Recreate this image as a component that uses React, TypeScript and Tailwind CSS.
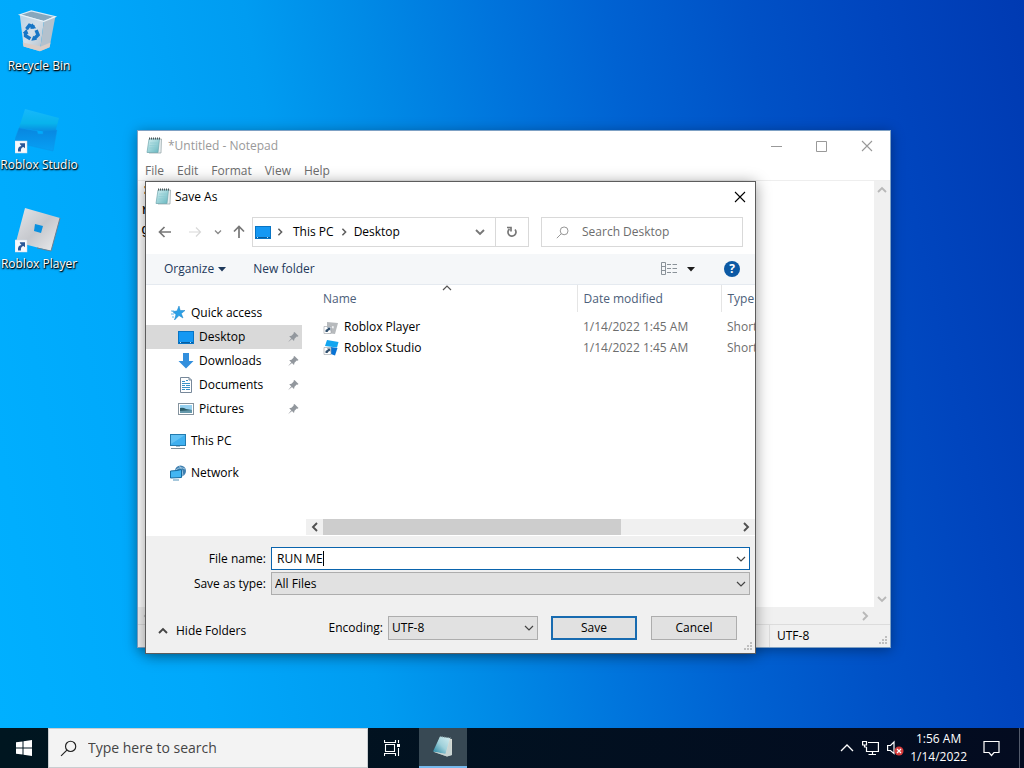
import type { ReactNode } from 'react';

function ShortcutArrow({ y = 34 }: { y?: number }) {
  return (
    <g transform={`translate(4 ${y})`}>
      <rect width="12" height="12" fill="#f7f9fc" stroke="#cfdbe8" strokeWidth="0.5" />
      <path d="M3 10.500C2.500 7 4 5.200 6.500 5L5 3.200 4.800 2.200H10V7.200L8.400 6C6.500 6.500 5.500 8 6 10.500Z" fill="#2b5797" />
    </g>
  );
}

function RecycleBinIcon() {
  return (
    <svg width="48" height="48" viewBox="4 -1 50 50" aria-hidden="true">
      <defs>
        <linearGradient id="bin" x1="0" y1="0" x2="1" y2="1">
          <stop offset="0" stopColor="#b9d3e6" />
          <stop offset="0.500" stopColor="#d5dfe8" />
          <stop offset="1" stopColor="#b4bfcb" />
        </linearGradient>
      </defs>
      <path d="M9 6 21 2 46 8 34 13Z" fill="#87a7bd" stroke="#dbeaf4" strokeWidth="1.200" />
      <path d="M9 6 34 13 30 44 13 39Z" fill="url(#bin)" />
      <path d="M34 13 46 8 40 40 30 44Z" fill="#b3c1cd" />
      <path d="M12 35 31 39 41 35 40 40 30 44 13 39Z" fill="#d9cdc8" />
      <path d="M9 6 34 13 46 8" fill="none" stroke="#eaf3f9" strokeWidth="1.200" />
      <g fill="none" stroke="#1876c6" strokeWidth="3.600">
        <path d="M16 21 19 17 24 19" />
        <path d="M26 22 28 27 24 31" />
        <path d="M20 31 15 28 15 24" />
      </g>
      <path d="m22 15 4 5-6 1Zm5 17-6 1 2-5ZM12 25l4-4 2 5Z" fill="#1876c6" />
    </svg>
  );
}

function StudioIcon() {
  return (
    <svg width="48" height="48" viewBox="4 0 48 48" aria-hidden="true">
      <defs>
        <linearGradient id="studioTop" x1="0" y1="0" x2="0" y2="1">
          <stop offset="0" stopColor="#17b8fb" />
          <stop offset="0.600" stopColor="#08b3ec" />
          <stop offset="1" stopColor="#0885df" />
        </linearGradient>
        <linearGradient id="studioLow" x1="0" y1="0" x2="0" y2="1">
          <stop offset="0" stopColor="#0886df" />
          <stop offset="1" stopColor="#07a0f5" />
        </linearGradient>
      </defs>
      <path d="M14 2 48 11 44 26 8 21Z" fill="url(#studioTop)" />
      <path d="M8 21 26 24 27 27 32 27 32 24 46 23 42 44 3 35Z" fill="url(#studioLow)" stroke="#0c94e6" strokeWidth="0.500" />
      <ShortcutArrow />
    </svg>
  );
}

function PlayerIcon() {
  return (
    <svg width="48" height="48" viewBox="4 0 48 48" aria-hidden="true">
      <defs>
        <linearGradient id="player" x1="0" y1="0" x2="1" y2="1">
          <stop offset="0" stopColor="#e4e6ea" />
          <stop offset="0.500" stopColor="#c6c8cd" />
          <stop offset="1" stopColor="#ededee" />
        </linearGradient>
      </defs>
      <path d="M14 2 49 12 40 45 5 36Z" fill="url(#player)" />
      <path d="M49 12 40 45 26 42" fill="none" stroke="#6d7f90" strokeWidth="1" />
      <path d="m24 18 8 2-2 7-7-2Z" fill="#0991e0" />
      <ShortcutArrow />
    </svg>
  );
}

function NotepadIcon() {
  return (
    <svg width="16" height="18" viewBox="0 0 16 18" aria-hidden="true">
      <defs>
        <linearGradient id="pad" x1="0" y1="0" x2="1" y2="1">
          <stop offset="0" stopColor="#d4f0f2" />
          <stop offset="1" stopColor="#65b6bf" />
        </linearGradient>
      </defs>
      <path d="M4 2H15.500L15 16H3Z" fill="#e9eef0" stroke="#8fa1a5" strokeWidth="0.700" />
      <path d="M3 2H13.500L12 15.500H1Z" fill="url(#pad)" stroke="#70a8af" strokeWidth="0.700" />
      <path d="M3 1.500H15" stroke="#4b5759" strokeWidth="1.800" strokeDasharray="1 1" />
      <path d="M4 6H11.500M3.700 8.500H11M3.300 11H10.700" stroke="#8ccbd1" strokeWidth="0.600" />
    </svg>
  );
}

function TaskNotepadIcon() {
  return (
    <svg width="24" height="24" viewBox="0 0 24 24" aria-hidden="true">
      <defs>
        <linearGradient id="task" x1="0" y1="1" x2="1" y2="0">
          <stop offset="0" stopColor="#1b7f9c" />
          <stop offset="0.500" stopColor="#9fd0da" />
          <stop offset="1" stopColor="#d5eef1" />
        </linearGradient>
      </defs>
      <path d="M9 2 21 4 21 20 16 21.500 3 17Z" fill="#d8dcd5" />
      <path d="M9 1.500 19 3 14.500 19 2 16.500Z" fill="url(#task)" />
      <path d="M9 1.500 20 3" stroke="#7b9299" strokeDasharray="1 1" />
      <path d="M2 16.500 14.500 19 19.500 4 21 20 16 21.500Z" fill="#c3d2d2" opacity="0.700" />
    </svg>
  );
}

function ScreenIcon() {
  return (
    <svg width="16" height="13" viewBox="0 0 16 13" aria-hidden="true">
      <rect x="0.500" y="0.500" width="15" height="12" fill="#1598f3" stroke="#0874c4" />
      <path d="M1 11.500H15" stroke="#075c9e" />
      <path d="M2 11.500H4M12 11.500H14" stroke="#bce0f8" strokeDasharray="1 1" />
    </svg>
  );
}

function Chevron({ className, dir = 'down', heavy = false }: { className?: string; dir?: 'up' | 'down' | 'left' | 'right'; heavy?: boolean }) {
  const paths = { down: 'M1 3 5 7 9 3', up: 'M1 7 5 3 9 7', left: 'M7 1 3 5 7 9', right: 'M3 1 7 5 3 9' };
  return (
    <svg width="10" height="10" viewBox="0 0 10 10" className={className} aria-hidden="true">
      <path d={paths[dir]} fill="none" stroke="currentColor" strokeWidth={heavy ? 1.9 : 1.2} />
    </svg>
  );
}

function CloseIcon() {
  return (
    <svg width="12" height="12" viewBox="0 0 12 12" aria-hidden="true">
      <path d="m1 1 10 10M11 1 1 11" stroke="currentColor" strokeWidth="1.100" />
    </svg>
  );
}

function Grip() {
  return (
    <svg width="9" height="9" viewBox="0 0 9 9" className="absolute right-0.5 bottom-0.5" aria-hidden="true">
      <path d="M6 0h2v2H6zM3 3h2v2H3zM6 3h2v2H6zM0 6h2v2H0zM3 6h2v2H3zM6 6h2v2H6z" fill="#bfbfbf" />
    </svg>
  );
}

function PinIcon() {
  return (
    <svg width="12" height="12" viewBox="0 0 12 12" aria-hidden="true">
      <path d="m7.500 1 4 4-1 .800-.800-.300L7.500 7.700 7 10 2.200 5.200 4.500 4.700 6.700 2.600 6.500 1.800ZM4.300 7.200 5 8 1 11.200Z" fill="#92979d" />
    </svg>
  );
}

function Magnifier({ size }: { size: number }) {
  return (
    <svg width={size} height={size} viewBox="0 0 16 16" aria-hidden="true">
      <circle cx="10" cy="6" r="4.800" fill="none" stroke="currentColor" strokeWidth="1.100" />
      <path d="M6.500 9.500 1 15" stroke="currentColor" strokeWidth="1.100" />
    </svg>
  );
}

function DesktopIcon({ label, children }: { label: string; children: ReactNode }) {
  return (
    <button className="flex h-[99px] w-[78px] flex-col items-center gap-[2px] text-xs leading-4 whitespace-nowrap text-white [text-shadow:0_1px_2px_#000,1px_1px_1px_#000]">
      {children}
      {label}
    </button>
  );
}

const starIcon = (
  <svg width="14" height="14" viewBox="0 0 14 14" aria-hidden="true">
    <path d="m8 0 1.200 4.500H14L10.300 7.500 12 12 8 9.500 3.500 14 5 8.500 1.500 5.500 6 5Z" fill="#2ba0e6" stroke="#1781c9" strokeWidth="0.500" />
    <path d="M0 5H3M0 8H3M1 11H3" stroke="#62b6e9" />
  </svg>
);
const downloadIcon = (
  <svg width="16" height="16" viewBox="0 0 16 16" aria-hidden="true">
    <path d="M5 0H11V8H15.500L8 15.500 .500 8H5Z" fill="#328fdd" />
  </svg>
);
const documentIcon = (
  <svg width="16" height="16" viewBox="0 0 16 16" aria-hidden="true">
    <path d="M2.500.500H11L13.500 3V15.500H2.500Z" fill="#fff" stroke="#77889a" />
    <path d="M11 .500V3H13.500" fill="none" stroke="#77889a" />
    <path d="M4 4.500H7M8 3.500H10M4 6.500H12M4 8.500H7M8 8.500H12M4 10.500H12M4 12.500H7M8 12.500H12" stroke="#3a93c8" />
  </svg>
);
const pictureIcon = (
  <svg width="16" height="12" viewBox="0 0 16 12" aria-hidden="true">
    <rect x="0.500" y="0.500" width="15" height="11" fill="#fff" stroke="#85939e" />
    <path d="M2 2H14V10H2Z" fill="#96d0ef" />
    <path d="M2 5Q5 4 8 6L14 7V10H2Z" fill="#2b5c68" />
    <path d="M2 8 14 7V10H2Z" fill="#6598ab" />
  </svg>
);
const pcIcon = (
  <svg width="16" height="15" viewBox="0 0 16 15" aria-hidden="true">
    <rect x="0.500" y="0.500" width="15" height="11" fill="#3fb0f0" stroke="#237baf" />
    <path d="M1 1H15L1 10Z" fill="#86d3fa" opacity="0.500" />
    <path d="M6 12H10V13H6Z" fill="#a3bccb" />
    <path d="M1 14.500H15" stroke="#7d8f99" />
  </svg>
);
const networkIcon = (
  <svg width="16" height="16" viewBox="0 0 16 16" aria-hidden="true">
    <circle cx="10.500" cy="6" r="5.500" fill="#3f7fb0" />
    <path d="M6 5Q10 1 15 4M9.500 1Q13 5 13 11" fill="none" stroke="#a9cee4" strokeWidth="0.900" />
    <path d="M.500 6 7 5.500 11.500 4.500V12.500L.500 13Z" fill="#43b6f2" stroke="#176b9f" />
    <path d="M3 15H9" stroke="#4f92b9" />
  </svg>
);

function FileIcon({ studio }: { studio: boolean }) {
  return (
    <svg width="16" height="16" viewBox="0 0 16 16" aria-hidden="true">
      {studio ? (
        <>
          <path d="M4 0 15.500 2 14 7.500 2 6Z" fill="#12a5f0" />
          <path d="M8 7 14.500 8 12 15.500 5 13Z" fill="#0873d4" />
        </>
      ) : (
        <>
          <path d="m4 3 11 1-3 11-8-1Z" fill="#b7babd" />
          <path d="m9 7 2 .500-.500 2-2-.500Z" fill="#eef0f2" />
        </>
      )}
      <path d="M1 7.500H8V14.500H1Z" fill="#fff" stroke="#9a9fa5" strokeWidth="0.600" />
      <path d="M2.500 13V11L5 9.500 4 8.500H7.300V11.800L6.200 10.800 4.500 13Z" fill="#30506e" />
    </svg>
  );
}

function SideRow({ icon, label, pinned = false, selected = false }: { icon: ReactNode; label: string; pinned?: boolean; selected?: boolean }) {
  return (
    <button className={`flex h-6 w-[156px] items-center gap-[5px] pr-[3px] text-black ${pinned ? 'pl-8' : 'pl-6'} ${selected ? 'bg-[#d9d9d9]' : ''}`}>
      <span className="flex w-4 justify-center">{icon}</span>
      <span className="flex-1 text-left">{label}</span>
      {pinned && <PinIcon />}
    </button>
  );
}

const files = [
  { name: 'Roblox Player', date: '1/14/2022 1:45 AM', type: 'Shortcut', studio: false },
  { name: 'Roblox Studio', date: '1/14/2022 1:45 AM', type: 'Shortcut', studio: true },
];

function SaveAsDialog() {
  return (
    <section role="dialog" aria-label="Save As" className="absolute top-[181px] left-[145px] w-[611px] border border-[#5c5c5c] bg-white shadow-[0_2px_14px_rgba(0,0,0,0.4)]">
      <header className="flex h-[30px] items-center gap-1 pl-[9px]">
        <NotepadIcon />
        <h2 className="flex-1">Save As</h2>
        <button aria-label="Close" className="flex h-7 w-[31px] items-center justify-center">
          <CloseIcon />
        </button>
      </header>

      <div className="mt-1 flex h-[32px] items-center pr-3 pl-3 text-[#5d5d5d]">
        <button aria-label="Back" className="mr-4">
          <svg width="14" height="14" viewBox="0 0 14 14" aria-hidden="true"><path d="M13 7H2M6.500 2 1.500 7 6.500 12" fill="none" stroke="#777" strokeWidth="1.700" /></svg>
        </button>
        <button aria-label="Forward" className="mr-3">
          <svg width="14" height="14" viewBox="0 0 14 14" aria-hidden="true"><path d="M1 7H12M8 2.500 12.500 7 8 11.500" fill="none" stroke="#d8d8d8" strokeWidth="1.200" /></svg>
        </button>
        <button aria-label="Recent locations" className="mr-2.5">
          <svg width="8" height="8" viewBox="0 0 8 8" aria-hidden="true"><path d="M1 2.500 4 5.500 7 2.500" fill="none" stroke="#888" strokeWidth="1.300" /></svg>
        </button>
        <button aria-label="Up" className="mr-1.5">
          <svg width="14" height="14" viewBox="0 0 14 14" aria-hidden="true"><path d="M7 13V2M2 6.500 7 1.500 12 6.500" fill="none" stroke="#777" strokeWidth="1.700" /></svg>
        </button>
        <nav aria-label="Location" className="flex h-[30px] flex-1 items-center border border-[#d9d9d9] pl-0.5">
          <ScreenIcon />
          <Chevron dir="right" heavy className="mx-[5px] size-2" />
          <a href="#this-pc" className="ml-1 text-black">This PC</a>
          <Chevron dir="right" heavy className="mx-1.5 size-2" />
          <a href="#desktop" className="flex-1 text-black">Desktop</a>
          <button aria-label="Previous locations" className="mr-2.5 text-[#777]"><Chevron heavy /></button>
          <button aria-label="Refresh" className="flex h-full w-[33px] items-center justify-center border-l border-[#d9d9d9]">
            <svg width="12" height="12" viewBox="0 0 12 12" aria-hidden="true">
              <path d="M3.500 3A4 4 0 1 0 9 3.500M1 1.500H5V5.500" fill="none" stroke="#777" strokeWidth="1.700" />
            </svg>
          </button>
        </nav>
        <label className="ml-3 flex h-[30px] w-[202px] items-center gap-[13px] border border-[#d9d9d9] pl-3.5 text-[#8a8a8a]">
          <Magnifier size={13} />
          <input aria-label="Search Desktop" placeholder="Search Desktop" className="w-36 outline-none placeholder:text-[#6d6d6d]" />
        </label>
      </div>

      <div className="mt-1.5 flex h-[31px] items-center border-b border-[#e5eaf0] bg-[#f5f7f9] pr-[15px] pl-[18px] text-[#1e395b]">
        <button className="mr-[27px] flex items-center gap-1">
          Organize
          <svg width="8" height="5" viewBox="0 0 8 5" aria-hidden="true"><path d="M0 0H8L4 4.500Z" fill="#1e395b" /></svg>
        </button>
        <button>New folder</button>
        <button aria-label="Change view" className="ml-auto flex items-center gap-2.5">
          <svg width="16" height="14" viewBox="0 0 16 14" aria-hidden="true">
            <path d="M.500.500H4.500V12.500H.500ZM.500 4.500H4.500M.500 8.500H4.500" fill="none" stroke="#8a9299" />
            <path d="M6 2.500H10M11.500 2.500H16M6 6.500H10M11.500 6.500H16M6 10.500H10M11.500 10.500H16" stroke="#8a9299" />
          </svg>
          <svg width="8" height="5" viewBox="0 0 8 5" aria-hidden="true"><path d="M0 0H8L4 4.500Z" fill="#1c1c1c" /></svg>
        </button>
        <button aria-label="Help" className="ml-[29px] flex size-4 items-center justify-center rounded-full bg-[#0c59a4] text-xs font-bold text-white">?</button>
      </div>

      <div className="flex h-[251px]">
        <nav aria-label="Folders" className="flex w-40 flex-col pt-4">
          <SideRow icon={starIcon} label="Quick access" />
          <SideRow icon={<ScreenIcon />} label="Desktop" pinned selected />
          <SideRow icon={downloadIcon} label="Downloads" pinned />
          <SideRow icon={documentIcon} label="Documents" pinned />
          <SideRow icon={pictureIcon} label="Pictures" pinned />
          <div className="mt-2"><SideRow icon={pcIcon} label="This PC" /></div>
          <div className="mt-2"><SideRow icon={networkIcon} label="Network" /></div>
        </nav>
        <div className="relative flex min-w-0 flex-1 flex-col overflow-hidden">
          <Chevron dir="up" className="absolute -top-[2px] left-[136px] text-[#555]" />
          <table className="w-[560px] table-fixed border-collapse text-left">
            <colgroup>
              <col className="w-[271px]" />
              <col className="w-36" />
              <col />
            </colgroup>
            <thead className="text-[#4c607a]">
              <tr className="h-[27px]">
                <th className="border-r border-[#e5e5e5] pl-[17px] font-normal">Name</th>
                <th className="border-r border-[#e5e5e5] pl-1.5 font-normal">Date modified</th>
                <th className="pl-1.5 font-normal">Type</th>
              </tr>
            </thead>
            <tbody className="text-[#6d6d6d] before:block before:h-1">
              {files.map((f) => (
                <tr key={f.name} className="h-[21px]">
                  <td className="pl-[17px] text-black">
                    <span className="flex items-center gap-[5px]"><FileIcon studio={f.studio} />{f.name}</span>
                  </td>
                  <td className="pl-1.5">{f.date}</td>
                  <td className="pl-1.5">{f.type}</td>
                </tr>
              ))}
            </tbody>
          </table>
          <div className="mt-auto mb-px flex h-4 items-center bg-[#f0f0f0] text-[#505050]">
            <span className="flex w-[17px] justify-center"><Chevron dir="left" heavy /></span>
            <span className="h-full w-[298px] bg-[#cdcdcd]" />
            <Chevron dir="right" heavy className="mr-1 ml-auto" />
          </div>
        </div>
      </div>

      <form className="relative bg-[#f0f0f0] pt-[11px] pb-[13px]" onSubmit={(e) => e.preventDefault()}>
        <div className="grid grid-cols-[120px_1fr] items-center gap-x-[5px] gap-y-[2px] pr-[5px]">
          <label htmlFor="filename" className="text-right">File name:</label>
          <div className="flex h-[23px] items-center border border-[#0a64ad] bg-white pr-[3px] pl-[5px]">
            <input id="filename" defaultValue="RUN ME" className="field-sizing-content outline-none" />
            <span className="h-[15px] w-px bg-black" />
            <Chevron className="ml-auto text-[#444]" />
          </div>
          <label htmlFor="filetype" className="text-right">Save as type:</label>
          <div className="relative">
            <select id="filetype" className="block h-[23px] w-full appearance-none border border-[#adadad] bg-[#e1e1e1] pl-[3px]">
              <option>All Files</option>
            </select>
            <Chevron className="pointer-events-none absolute top-[7px] right-1 text-[#444]" />
          </div>
        </div>
        <div className="mt-[21px] flex items-center pr-[18px] pl-3">
          <button type="button" className="flex items-center gap-2 pt-1.5"><Chevron dir="up" heavy className="text-[#444]" />Hide Folders</button>
          <label htmlFor="encoding" className="mr-[5px] ml-auto">Encoding:</label>
          <div className="relative mr-[13px]">
            <select id="encoding" className="block h-6 w-[150px] appearance-none border border-[#adadad] bg-[#e1e1e1] pl-[3px]">
              <option>UTF-8</option>
            </select>
            <Chevron className="pointer-events-none absolute top-[7px] right-1 text-[#444]" />
          </div>
          <button type="submit" className="mr-3.5 h-6 w-[86px] border-2 border-[#186bb0] bg-[#e1e1e1]">Save</button>
          <button type="button" className="h-6 w-[86px] border border-[#adadad] bg-[#e1e1e1]">Cancel</button>
        </div>
        <Grip />
      </form>
    </section>
  );
}

function NotepadWindow() {
  return (
    <section aria-label="Notepad" className="absolute top-[130px] left-[137px] flex h-[518px] w-[754px] flex-col border border-[#29629d]/60 bg-white text-[#6d6d6d] shadow-[0_2px_12px_rgba(0,0,0,0.35)]">
      <header className="flex h-[30px] items-center pl-2 text-[#999]">
        <NotepadIcon />
        <h1 className="ml-1.5 flex-1">*Untitled - Notepad</h1>
        <button aria-label="Minimize" className="flex w-[45px] justify-center">
          <svg width="11" height="11" viewBox="0 0 11 11" aria-hidden="true"><path d="M0 5.500H11" stroke="currentColor" /></svg>
        </button>
        <button aria-label="Maximize" className="flex w-[45px] justify-center">
          <svg width="11" height="11" viewBox="0 0 11 11" aria-hidden="true"><path d="M.500.500H10.500V10.500H.500Z" fill="none" stroke="currentColor" /></svg>
        </button>
        <button aria-label="Close" className="flex w-[46px] justify-center"><CloseIcon /></button>
      </header>
      <nav aria-label="Menu" className="flex h-[19px] items-center gap-[13px] pl-[7px]">
        <button>File</button>
        <button>Edit</button>
        <button>Format</button>
        <button>View</button>
        <button>Help</button>
      </nav>
      <div className="flex flex-1 border-t border-[#eee]">
        <textarea aria-label="Text editor" spellCheck={false} defaultValue={':\nr\ng'} className="flex-1 resize-none pl-[3px] font-['Liberation_Mono',monospace] text-[15px] leading-5 text-black outline-none" />
        <div className="flex w-4 flex-col items-center justify-between bg-[#f0f0f0] pt-1 pb-[3px] text-[#b8b8b8]">
          <Chevron dir="up" heavy />
          <Chevron heavy />
        </div>
      </div>
      <div className="flex h-[17px] items-center justify-between bg-[#f0f0f0] pr-5 pl-1 text-[#b8b8b8]">
        <Chevron dir="left" heavy />
        <Chevron dir="right" heavy />
      </div>
      <footer className="relative flex h-[23px] border-t border-[#dcdcdc] bg-[#f0f0f0] text-black">
        <span className="ml-auto flex w-[121px] items-center border-l border-[#dcdcdc] pl-[7px]">UTF-8</span>
        <Grip />
      </footer>
    </section>
  );
}

function Taskbar() {
  return (
    <footer className="flex h-10 shrink-0 items-center bg-linear-to-r from-[#001620] to-[#030b20] text-white">
      <button aria-label="Start" className="flex h-full w-12 items-center justify-center">
        <svg width="16" height="16" viewBox="0 0 16 16" fill="#fff" aria-hidden="true">
          <path d="M0 2.300 6.500 1.400V7.500H0ZM7.500 1.300 16 0V7.500H7.500ZM0 8.500H6.500V14.600L0 13.700ZM7.500 8.500H16V16L7.500 14.700Z" />
        </svg>
      </button>
      <label className="flex h-full w-80 items-center gap-[11px] border border-[#c9cdd0] bg-[#f3f3f3] pl-[11px] text-[#222]">
        <Magnifier size={17} />
        <input aria-label="Search" placeholder="Type here to search" className="w-60 text-sm outline-none placeholder:text-[#454545]" />
      </label>
      <button aria-label="Task view" className="mr-[3px] flex h-full w-12 items-center justify-center">
        <svg width="17" height="16" viewBox="0 0 17 16" fill="none" stroke="#fff" strokeWidth="1.100" aria-hidden="true">
          <path d="M1.500 4.500H10.500V11.500H1.500ZM.500 0V2.500H11.500V0M.500 16V13.500H11.500V16M14.500 0V3M14.500 8V16" />
          <path d="M13 4H16V7H13Z" fill="#fff" stroke="none" />
        </svg>
      </button>
      <button aria-label="Notepad" className="flex h-full w-12 items-center justify-center border-b-2 border-[#76b9ed] bg-[#384954]"><TaskNotepadIcon /></button>
      <div className="ml-auto flex h-full items-center">
        <button aria-label="Show hidden icons" className="mr-2">
          <svg width="14" height="14" viewBox="0 0 14 14" aria-hidden="true"><path d="m1 10 6-6 6 6" fill="none" stroke="#fff" strokeWidth="1.300" /></svg>
        </button>
        <button aria-label="Network" className="mr-2">
          <svg width="17" height="16" viewBox="0 0 17 16" fill="none" stroke="#fff" strokeWidth="1.200" aria-hidden="true">
            <path d="M6 2.500H16.400V11.500H4.500V7M10.500 11.500V14.500M6.500 14.500H14M.600 1.500H4.500V5H.600ZM2.500 5V7H4.500" />
          </svg>
        </button>
        <button aria-label="Volume muted" className="mr-1.5">
          <svg width="17" height="16" viewBox="0 0 17 16" aria-hidden="true">
            <path d="M.600 5.500H3.500L7 2V13.500L3.500 10.500H.600Z" fill="none" stroke="#fff" strokeWidth="1.200" />
            <circle cx="12" cy="11" r="4.500" fill="#d63b3b" />
            <path d="m10 9 4 4M14 9l-4 4" stroke="#fff" strokeWidth="1.200" />
          </svg>
        </button>
        <time className="text-center text-xs leading-[18px]">1:56 AM<br />1/14/2022</time>
        <button aria-label="Notifications" className="mr-[19px] ml-4">
          <svg width="17" height="17" viewBox="0 0 17 17" aria-hidden="true">
            <path d="M1 1.500H16V12.500H11L8.500 15.500 6 12.500H1Z" fill="none" stroke="#fff" strokeWidth="1.200" />
          </svg>
        </button>
        <span className="h-full w-[5px] border-l border-[#535b6c]" />
      </div>
    </footer>
  );
}

export default function App() {
  return (
    <div className="flex min-h-screen flex-col overflow-hidden font-['Open_Sans','Noto_Sans',sans-serif] text-xs leading-4">
      <main className="relative flex-1 bg-[linear-gradient(79deg,#00b0ff_0%,#00a8fb_18%,#009cf1_33%,#008ae6_43%,#0074dc_54%,#0062d2_64%,#0051c6_76%,#0045be_87%,#003ab2_100%)]">
        <div className="flex flex-col pt-2">
          <DesktopIcon label="Recycle Bin"><RecycleBinIcon /></DesktopIcon>
          <DesktopIcon label="Roblox Studio"><StudioIcon /></DesktopIcon>
          <DesktopIcon label="Roblox Player"><PlayerIcon /></DesktopIcon>
        </div>
        <NotepadWindow />
        <SaveAsDialog />
      </main>
      <Taskbar />
    </div>
  );
}
